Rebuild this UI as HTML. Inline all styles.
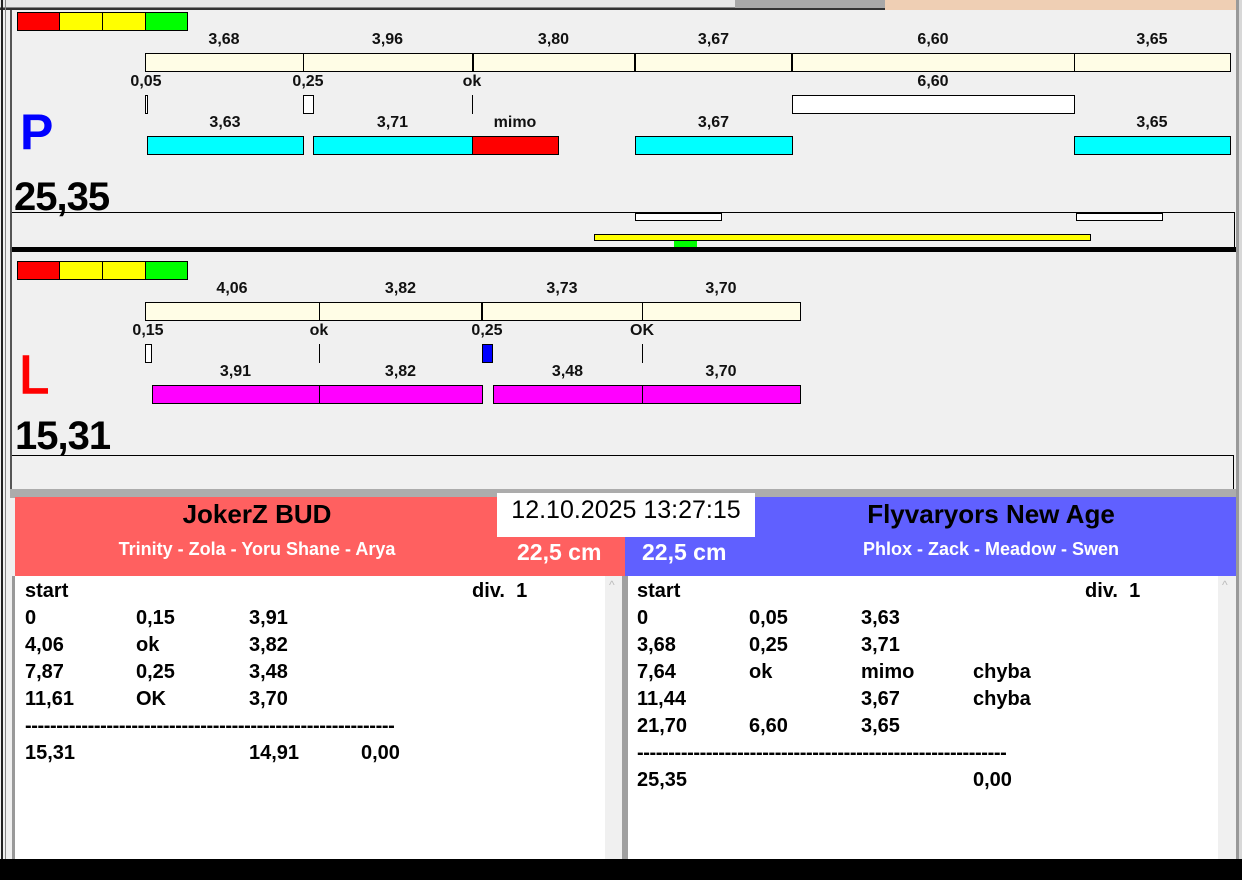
<!DOCTYPE html>
<html><head><meta charset="utf-8"><style>
*{margin:0;padding:0;box-sizing:border-box}
body{width:1242px;height:880px;overflow:hidden;background:#f0f0f0;position:relative;font-family:"Liberation Sans",Arial,sans-serif}
div{position:absolute}
.b{border:1px solid #000}
.lb{font-weight:bold;font-size:16px;text-align:center;line-height:18px;color:#111;white-space:nowrap}
.vl{width:1px;background:#000}
.t{font-weight:bold;font-size:20px;line-height:24px;color:#000;white-space:nowrap}
.d{font-weight:bold;font-size:20px;line-height:24px;color:#000;white-space:nowrap;letter-spacing:-0.4px}
</style></head><body>
<!-- top strip -->
<div style="left:0;top:0;width:735px;height:8px;background:#e8e8e8;border-bottom:1px solid #888"></div>
<div style="left:735px;top:0;width:150px;height:8px;background:#a8a8a8"></div>
<div style="left:885px;top:0;width:353px;height:10px;background:#efcfb4"></div>
<div style="left:0;top:8px;width:885px;height:2px;background:#333"></div>
<div style="left:1px;top:0;width:2px;height:860px;background:#222"></div>
<div style="left:5px;top:0;width:1px;height:860px;background:#888"></div>
<div style="left:10px;top:10px;width:2px;height:480px;background:#555"></div>
<div style="left:1236px;top:0;width:3px;height:860px;background:#999"></div>
<div style="left:1239px;top:0;width:3px;height:860px;background:#d8d8d8"></div>

<!-- P panel -->
<div class="b" style="left:17px;top:12px;width:43px;height:19px;background:#f00"></div>
<div class="b" style="left:59px;top:12px;width:44px;height:19px;background:#ff0"></div>
<div class="b" style="left:102px;top:12px;width:44px;height:19px;background:#ff0"></div>
<div class="b" style="left:145px;top:12px;width:43px;height:19px;background:#0f0"></div>

<div class="lb" style="left:145px;top:31px;width:158px">3,68</div>
<div class="lb" style="left:303px;top:31px;width:169px">3,96</div>
<div class="lb" style="left:472px;top:31px;width:163px">3,80</div>
<div class="lb" style="left:635px;top:31px;width:157px">3,67</div>
<div class="lb" style="left:792px;top:31px;width:282px">6,60</div>
<div class="lb" style="left:1074px;top:31px;width:156px">3,65</div>
<div class="b" style="left:145px;top:53px;width:1086px;height:19px;background:#fffde6"></div>
<div class="vl" style="left:303px;top:53px;height:19px"></div>
<div class="vl" style="left:472px;top:53px;height:19px;width:2px"></div>
<div class="vl" style="left:634px;top:53px;height:19px;width:2px"></div>
<div class="vl" style="left:791px;top:53px;height:19px;width:2px"></div>
<div class="vl" style="left:1074px;top:53px;height:19px"></div>

<div class="lb" style="left:116px;top:73px;width:60px">0,05</div>
<div class="lb" style="left:278px;top:73px;width:60px">0,25</div>
<div class="lb" style="left:442px;top:73px;width:60px">ok</div>
<div class="lb" style="left:792px;top:73px;width:282px">6,60</div>
<div class="b" style="left:145px;top:95px;width:3px;height:19px;background:#fff"></div>
<div class="b" style="left:303px;top:95px;width:11px;height:19px;background:#fff"></div>
<div class="vl" style="left:472px;top:95px;height:19px"></div>
<div class="b" style="left:792px;top:95px;width:283px;height:19px;background:#fff"></div>

<div style="left:20px;top:104px;font-weight:bold;font-size:50px;line-height:56px;color:#0000ff">P</div>
<div class="lb" style="left:147px;top:114px;width:156px">3,63</div>
<div class="lb" style="left:313px;top:114px;width:159px">3,71</div>
<div class="lb" style="left:472px;top:114px;width:86px">mimo</div>
<div class="lb" style="left:635px;top:114px;width:157px">3,67</div>
<div class="lb" style="left:1074px;top:114px;width:156px">3,65</div>
<div class="b" style="left:147px;top:136px;width:157px;height:19px;background:#00ffff"></div>
<div class="b" style="left:313px;top:136px;width:160px;height:19px;background:#00ffff"></div>
<div class="b" style="left:472px;top:136px;width:87px;height:19px;background:#ff0000"></div>
<div class="b" style="left:635px;top:136px;width:158px;height:19px;background:#00ffff"></div>
<div class="b" style="left:1074px;top:136px;width:157px;height:19px;background:#00ffff"></div>

<div style="left:14px;top:174px;font-weight:bold;font-size:40px;line-height:46px;letter-spacing:-1px;color:#000">25,35</div>
<div style="left:12px;top:212px;width:1223px;height:36px;border-top:1px solid #000;border-right:1px solid #000"></div>
<div class="b" style="left:635px;top:213px;width:87px;height:8px;background:#fff"></div>
<div class="b" style="left:1076px;top:213px;width:87px;height:8px;background:#fff"></div>
<div class="b" style="left:594px;top:234px;width:497px;height:7px;background:#ff0"></div>
<div style="left:674px;top:241px;width:23px;height:6px;background:#0f0"></div>
<div style="left:12px;top:247px;width:1224px;height:5px;background:#000"></div>

<!-- L panel -->
<div class="b" style="left:17px;top:261px;width:43px;height:19px;background:#f00"></div>
<div class="b" style="left:59px;top:261px;width:44px;height:19px;background:#ff0"></div>
<div class="b" style="left:102px;top:261px;width:44px;height:19px;background:#ff0"></div>
<div class="b" style="left:145px;top:261px;width:43px;height:19px;background:#0f0"></div>
<div class="lb" style="left:145px;top:280px;width:174px">4,06</div>
<div class="lb" style="left:319px;top:280px;width:163px">3,82</div>
<div class="lb" style="left:482px;top:280px;width:160px">3,73</div>
<div class="lb" style="left:642px;top:280px;width:158px">3,70</div>
<div class="b" style="left:145px;top:302px;width:656px;height:19px;background:#fffde6"></div>
<div class="vl" style="left:319px;top:302px;height:19px"></div>
<div class="vl" style="left:481px;top:302px;height:19px;width:2px"></div>
<div class="vl" style="left:642px;top:302px;height:19px"></div>
<div class="lb" style="left:118px;top:322px;width:60px">0,15</div>
<div class="lb" style="left:289px;top:322px;width:60px">ok</div>
<div class="lb" style="left:457px;top:322px;width:60px">0,25</div>
<div class="lb" style="left:612px;top:322px;width:60px">OK</div>
<div class="b" style="left:145px;top:344px;width:7px;height:19px;background:#fff"></div>
<div class="vl" style="left:319px;top:344px;height:19px"></div>
<div class="b" style="left:482px;top:344px;width:11px;height:19px;background:#0000ff"></div>
<div class="vl" style="left:642px;top:344px;height:19px"></div>
<div style="left:19px;top:346px;font-size:54px;line-height:58px;color:#f00;-webkit-text-stroke:1.5px #f00">L</div>
<div class="lb" style="left:152px;top:363px;width:167px">3,91</div>
<div class="lb" style="left:319px;top:363px;width:163px">3,82</div>
<div class="lb" style="left:493px;top:363px;width:149px">3,48</div>
<div class="lb" style="left:642px;top:363px;width:158px">3,70</div>
<div class="b" style="left:152px;top:385px;width:331px;height:19px;background:#ff00ff"></div>
<div class="vl" style="left:319px;top:385px;height:19px"></div>
<div class="b" style="left:493px;top:385px;width:308px;height:19px;background:#ff00ff"></div>
<div class="vl" style="left:642px;top:385px;height:19px"></div>
<div style="left:15px;top:413px;font-weight:bold;font-size:40px;line-height:46px;letter-spacing:-1px;color:#000">15,31</div>
<div style="left:12px;top:455px;width:1222px;height:34px;border-top:1px solid #000;border-right:1px solid #000"></div>

<!-- bottom -->
<div style="left:10px;top:489px;width:1226px;height:9px;background:#acacac"></div>
<div style="left:15px;top:497px;width:610px;height:79px;background:#ff6060"></div>
<div style="left:625px;top:497px;width:611px;height:79px;background:#6060ff"></div>
<div style="left:15px;top:498px;width:484px;text-align:center;font-weight:bold;font-size:26px;line-height:32px;color:#000">JokerZ BUD</div>
<div style="left:15px;top:538px;width:484px;text-align:center;font-weight:bold;font-size:18px;line-height:22px;color:#fff">Trinity - Zola - Yoru Shane - Arya</div>
<div style="left:517px;top:538px;font-weight:bold;font-size:23px;line-height:28px;color:#fff">22,5 cm</div>
<div style="left:497px;top:493px;width:258px;height:44px;background:#fff"></div>
<div style="left:497px;top:493px;width:258px;text-align:center;font-size:25px;line-height:34px;color:#000">12.10.2025 13:27:15</div>
<div style="left:642px;top:538px;font-weight:bold;font-size:23px;line-height:28px;color:#fff">22,5 cm</div>
<div style="left:755px;top:498px;width:472px;text-align:center;font-weight:bold;font-size:26px;line-height:32px;color:#000">Flyvaryors New Age</div>
<div style="left:755px;top:538px;width:472px;text-align:center;font-weight:bold;font-size:18px;line-height:22px;color:#fff">Phlox - Zack - Meadow - Swen</div>

<div style="left:12px;top:576px;width:3px;height:283px;background:#999"></div>
<div style="left:15px;top:576px;width:590px;height:283px;background:#fff"></div>
<div style="left:605px;top:576px;width:17px;height:283px;background:#f0f0f0"></div>
<div style="left:609px;top:578px;font-size:12px;color:#bbb">^</div>
<div style="left:622px;top:576px;width:6px;height:283px;background:#a0a0a0"></div>
<div style="left:628px;top:576px;width:590px;height:283px;background:#fff"></div>
<div style="left:1218px;top:576px;width:18px;height:283px;background:#f0f0f0"></div>
<div style="left:1222px;top:578px;font-size:12px;color:#bbb">^</div>

<div class="t" style="left:25px;top:579px">start</div><div class="t" style="left:472px;top:579px">div.&nbsp; 1</div>
<div class="t" style="left:25px;top:606px">0</div><div class="t" style="left:136px;top:606px">0,15</div><div class="t" style="left:249px;top:606px">3,91</div>
<div class="t" style="left:25px;top:633px">4,06</div><div class="t" style="left:136px;top:633px">ok</div><div class="t" style="left:249px;top:633px">3,82</div>
<div class="t" style="left:25px;top:660px">7,87</div><div class="t" style="left:136px;top:660px">0,25</div><div class="t" style="left:249px;top:660px">3,48</div>
<div class="t" style="left:25px;top:687px">11,61</div><div class="t" style="left:136px;top:687px">OK</div><div class="t" style="left:249px;top:687px">3,70</div>
<div class="d" style="left:25px;top:714px">-----------------------------------------------------------</div>
<div class="t" style="left:25px;top:741px">15,31</div><div class="t" style="left:249px;top:741px">14,91</div><div class="t" style="left:361px;top:741px">0,00</div>

<div class="t" style="left:637px;top:579px">start</div><div class="t" style="left:1085px;top:579px">div.&nbsp; 1</div>
<div class="t" style="left:637px;top:606px">0</div><div class="t" style="left:749px;top:606px">0,05</div><div class="t" style="left:861px;top:606px">3,63</div>
<div class="t" style="left:637px;top:633px">3,68</div><div class="t" style="left:749px;top:633px">0,25</div><div class="t" style="left:861px;top:633px">3,71</div>
<div class="t" style="left:637px;top:660px">7,64</div><div class="t" style="left:749px;top:660px">ok</div><div class="t" style="left:861px;top:660px">mimo</div><div class="t" style="left:973px;top:660px">chyba</div>
<div class="t" style="left:637px;top:687px">11,44</div><div class="t" style="left:861px;top:687px">3,67</div><div class="t" style="left:973px;top:687px">chyba</div>
<div class="t" style="left:637px;top:714px">21,70</div><div class="t" style="left:749px;top:714px">6,60</div><div class="t" style="left:861px;top:714px">3,65</div>
<div class="d" style="left:637px;top:741px">-----------------------------------------------------------</div>
<div class="t" style="left:637px;top:768px">25,35</div><div class="t" style="left:973px;top:768px">0,00</div>

<div style="left:0;top:859px;width:1242px;height:21px;background:#000"></div>
</body></html>
